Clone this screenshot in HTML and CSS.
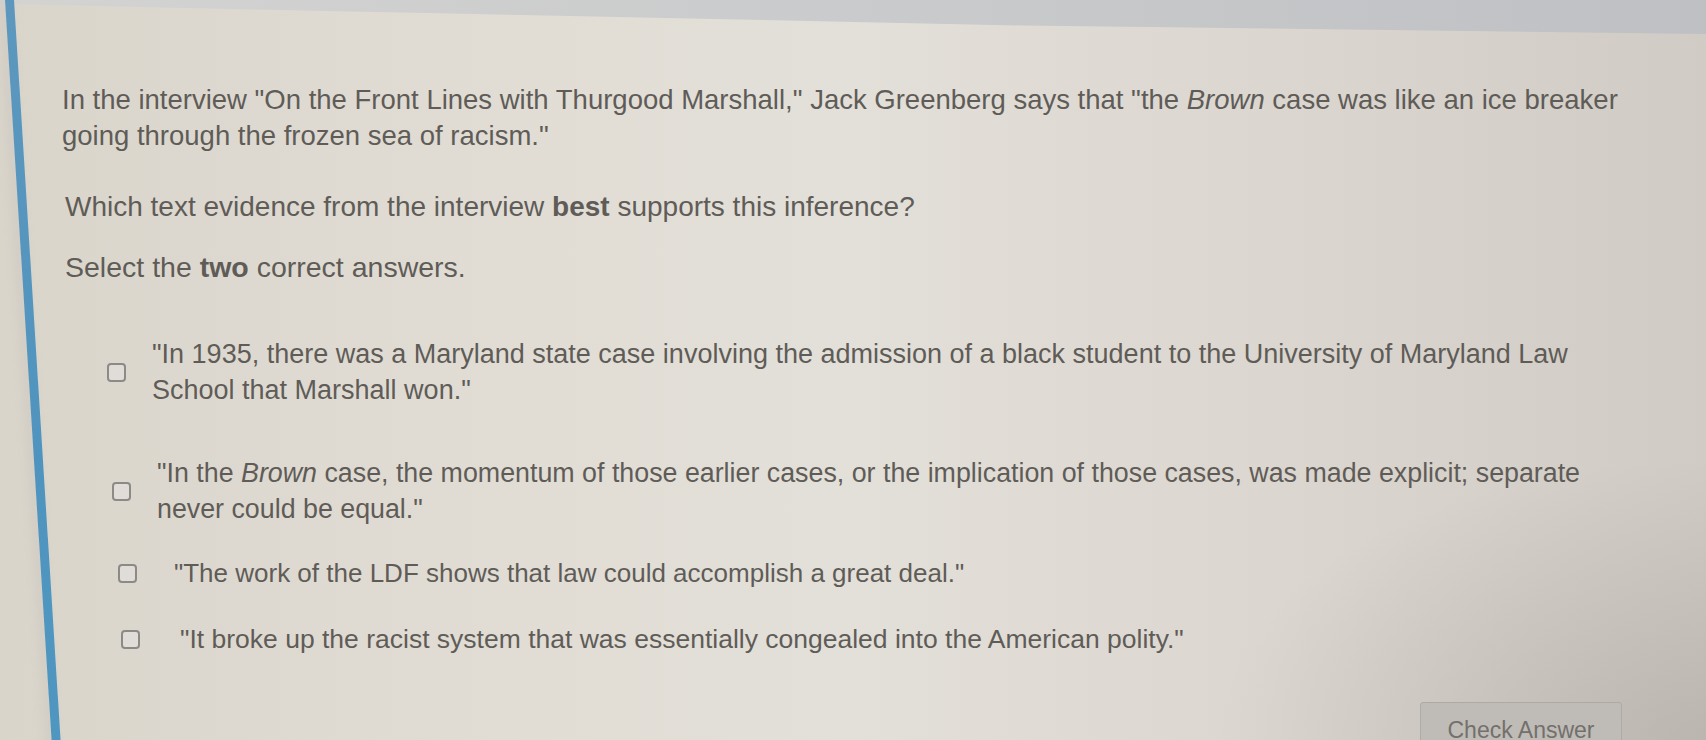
FILE: index.html
```html
<!DOCTYPE html>
<html lang="en">
<head>
<meta charset="utf-8">
<title>Question</title>
<link rel="stylesheet" href="styles.css">
</head>
<body>
<div class="screen">
  <div class="topband"></div>
  <div class="page">
    <div class="rail"><div class="rail-line"></div></div>
    <main class="content">
      <p class="prompt">In the interview "On the Front Lines with Thurgood Marshall," Jack Greenberg says that "the <em>Brown</em> case was like an ice breaker going through the frozen sea of racism."</p>
      <p class="ask">Which text evidence from the interview <b>best</b> supports this inference?</p>
      <p class="select">Select the <b>two</b> correct answers.</p>
      <ul class="options">
        <li class="option o1"><span class="box"></span><span class="otext">"In 1935, there was a Maryland state case involving the admission of a black student to the University of Maryland Law School that Marshall won."</span></li>
        <li class="option o2"><span class="box"></span><span class="otext">"In the <em>Brown</em> case, the momentum of those earlier cases, or the implication of those cases, was made explicit; separate never could be equal."</span></li>
        <li class="option o3 single"><span class="box"></span><span class="otext">"The work of the LDF shows that law could accomplish a great deal."</span></li>
        <li class="option o4 single"><span class="box"></span><span class="otext">"It broke up the racist system that was essentially congealed into the American polity."</span></li>
      </ul>
      <div class="actions"><button class="check">Check Answer</button></div>
    </main>
  </div>
</div>
</body>
</html>
```
FILE: styles.css
```css
html, body {
  margin: 0;
  padding: 0;
  height: 100%;
  overflow: hidden;
}
body {
  font-family: "Liberation Sans", Arial, sans-serif;
  color: #5f5c58;
  background:
    radial-gradient(ellipse 700px 400px at 100% 100%, rgba(160,155,150,0.45), rgba(160,155,150,0) 70%),
    linear-gradient(to right, #dad5cb 0%, #e1ddd5 30%, #e3e0d9 50%, #dbd6cf 75%, #d0cbc4 100%);
}
.screen {
  position: relative;
  height: 740px;
}
.topband {
  height: 34px;
  background: linear-gradient(to right, #d3d3d2, #c8c9cb 60%, #bfc0c3);
  clip-path: polygon(0 0, 100% 0, 100% 100%, 60% 75%, 0 12%);
  margin-bottom: -34px;
}
.page {
  display: flex;
  height: 740px;
}
.rail {
  width: 62px;
  flex: none;
  position: relative;
}
.rail-line {
  position: absolute;
  top: 0;
  left: 5px;
  width: 9px;
  height: 760px;
  background: linear-gradient(to bottom, #5d97bd, #4f94bf 60%, #4e97c0);
  transform: skewX(3.6deg);
  transform-origin: top left;
  box-shadow: -6px 0 10px rgba(190,186,180,0.35);
}
.content {
  flex: 1;
  padding-top: 82px;
  padding-right: 60px;
}
p {
  margin: 0;
  font-size: 27.5px;
  line-height: 36px;
}
.prompt {
  max-width: 1600px;
}
.ask {
  margin-top: 35px;
  padding-left: 3px;
  font-size: 28px;
}
.select {
  margin-top: 24px;
  padding-left: 3px;
  font-size: 28.5px;
}
.options {
  list-style: none;
  margin: 51px 0 0 0;
  padding: 0;
}
.option {
  display: flex;
  align-items: center;
  gap: 26px;
  font-size: 27px;
  line-height: 36px;
}
.option.single {
  gap: 37px;
  font-size: 26.5px;
}
.o1 { margin-left: 45px; }
.o2 { margin-left: 50px; margin-top: 47px; font-size: 26.8px; }
.o3 { margin-left: 56px; margin-top: 28px; }
.option.o3 { font-size: 26px; }
.o4 { margin-left: 59px; margin-top: 30px; }
.o4 .otext { margin-left: 3px; }
.otext {
  max-width: 1450px;
}
.box {
  flex: none;
  width: 15px;
  height: 15px;
  border: 2px solid #8c8a87;
  border-radius: 4px;
  background: #e0ddd8;
}
.actions {
  display: flex;
  justify-content: flex-end;
  margin-top: 45px;
  padding-right: 24px;
}
.check {
  width: 202px;
  height: 52px;
  font-family: "Liberation Sans", Arial, sans-serif;
  font-size: 23px;
  color: #73706c;
  background: #bfbcb7;
  border: 1px solid #aeaaa6;
  border-radius: 3px;
  padding: 4px 0 0 0;
}
```
